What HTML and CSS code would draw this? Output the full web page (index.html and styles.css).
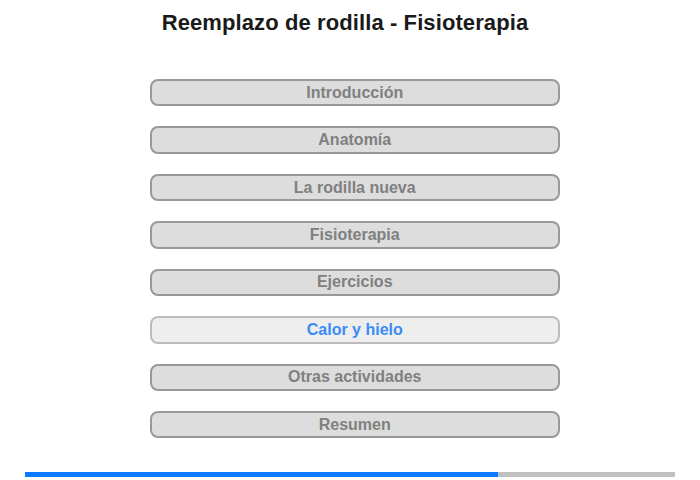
FILE: index.html
```html
<!DOCTYPE html>
<html lang="es">
<head>
<meta charset="utf-8">
<title>Reemplazo de rodilla - Fisioterapia</title>
<link rel="stylesheet" href="styles.css">
</head>
<body>
<div class="page">
  <h1 class="title">Reemplazo de rodilla - Fisioterapia</h1>
  <nav class="menu">
    <a class="item">Introducción</a>
    <a class="item">Anatomía</a>
    <a class="item">La rodilla nueva</a>
    <a class="item">Fisioterapia</a>
    <a class="item">Ejercicios</a>
    <a class="item active">Calor y hielo</a>
    <a class="item">Otras actividades</a>
    <a class="item">Resumen</a>
  </nav>
  <div class="progress"><div class="progress-fill" style="width:72.77%"></div></div>
</div>
</body>
</html>
```
FILE: styles.css
```css
html, body {
  margin: 0;
  padding: 0;
  background: #fff;
}
.page {
  width: 700px;
  height: 480px;
  font-family: "Liberation Sans", Arial, sans-serif;
  display: flex;
  flex-direction: column;
}
.title {
  margin: 10px 0 0 0;
  padding-right: 10px;
  font-size: 22px;
  line-height: 26px;
  font-weight: bold;
  letter-spacing: 0.1px;
  color: #1a1a1a;
  text-align: center;
}
.menu {
  margin: 43px 0 0 150px;
  width: 409.5px;
  display: flex;
  flex-direction: column;
  gap: 20px;
}
.item {
  box-sizing: border-box;
  height: 27.43px;
  border: 2px solid #999;
  border-radius: 8px;
  background: #ddd;
  color: #808080;
  font-size: 16px;
  font-weight: bold;
  display: flex;
  align-items: center;
  justify-content: center;
}
.item.active {
  background: #eee;
  border-color: #bbb;
  color: #3a8cf5;
}
.progress {
  margin: 34px 0 0 25px;
  width: 650px;
  height: 4.5px;
  background: #c0c0c0;
}
.progress-fill {
  height: 100%;
  background: #0a7bff;
}
```
